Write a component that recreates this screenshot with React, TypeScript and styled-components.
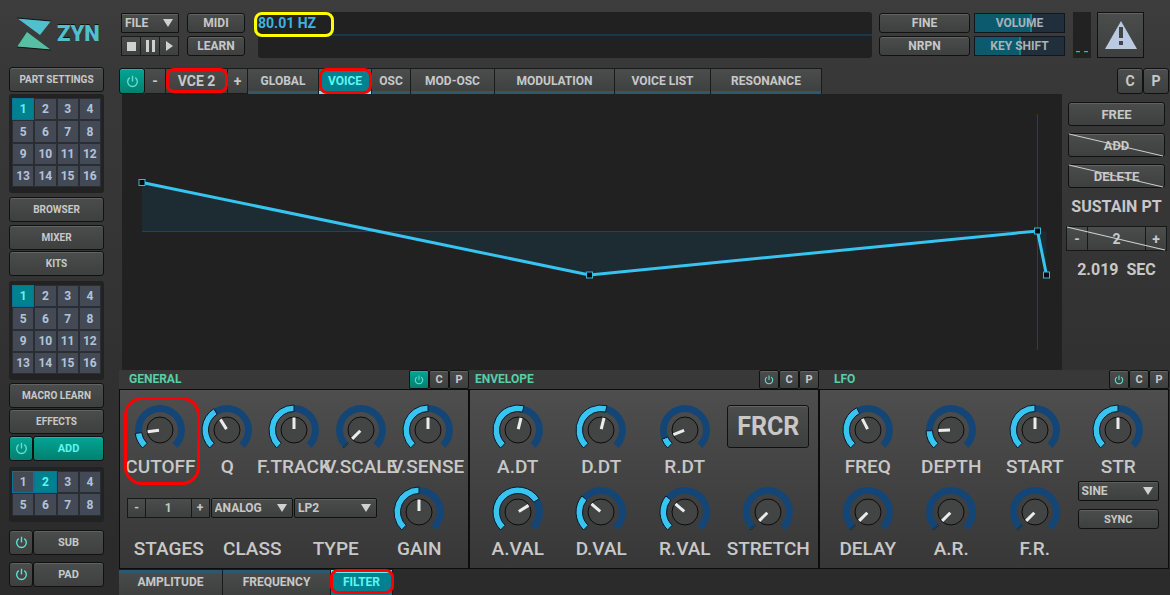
import React, { useState } from "react";
import styled, { createGlobalStyle } from "styled-components";

const GlobalStyle = createGlobalStyle`
  *, *::before, *::after { box-sizing: border-box; }
  body {
    margin: 0;
    background: #2b2b2b;
    color: #c8c8c8;
    font-family: Roboto, "Liberation Sans", sans-serif;
    font-weight: 700;
    font-size: 12px;
  }
  button, select, input { font: inherit; color: inherit; margin: 0; padding: 0; }
  button { cursor: pointer; }
`;

const face = "linear-gradient(#4b4d4c, #3e403f)";
const activeFace = "linear-gradient(#04a595, #028070)";

const Shell = styled.div`
  display: flex;
  min-height: 100vh;
  background: linear-gradient(#3d3d3d, #383838 12%, #363636 35%, #2b2b2b 92%);
`;

const Sidebar = styled.nav`
  flex: 0 0 119px;
  display: flex;
  flex-direction: column;
  padding: 0 15px 0 9px;
`;

const Main = styled.main`
  flex: 1;
  min-width: 0;
  padding-right: 1px;
`;

const Logo = styled.div`
  display: flex;
  align-items: center;
  height: 67px;
  padding-left: 7px;
  gap: 5px;
`;

const LogoText = styled.span`
  font-size: 22px;
  font-weight: 900;
  line-height: 24px;
  color: #4fc0cc;
  text-shadow: 0 -1px 0 #111;
`;

const Button = styled.button<{ $h?: number; $size?: number; $on?: boolean }>`
  display: flex;
  align-items: center;
  justify-content: center;
  width: 100%;
  height: ${(p) => p.$h ?? 25}px;
  border: 1px solid #111;
  border-radius: 3px;
  background: ${(p) => (p.$on ? activeFace : face)};
  box-shadow: inset 0 1px 0 ${(p) => (p.$on ? "#1fb5a5" : "#616362")};
  color: ${(p) => (p.$on ? "#5ff5ee" : "#c8c8c8")};
  font-size: ${(p) => p.$size ?? 12}px;
  white-space: nowrap;
`;

const Stack = styled.div<{ $top: number; $gap?: number }>`
  display: flex;
  flex-direction: column;
  gap: ${(p) => p.$gap ?? 1}px;
  margin-top: ${(p) => p.$top}px;
`;

const EngineRow = styled.div<{ $top: number }>`
  display: grid;
  grid-template-columns: 24px 1fr;
  margin-top: ${(p) => p.$top}px;
`;

const NumberPad = styled.div<{ $top: number }>`
  display: grid;
  grid-template-columns: repeat(4, 1fr);
  grid-template-rows: 22px 23px;
  grid-auto-rows: 22px;
  margin-top: ${(p) => p.$top}px;
  padding: 4px 3px 6px;
  border-radius: 3px;
  background: #222;
`;

const NumberCell = styled.button<{ $on?: boolean; $outlined?: boolean }>`
  border: 1px solid ${(p) => (p.$on || p.$outlined ? "#0b7292" : "#2a2d31")};
  background: ${(p) => (p.$on ? "#00818f" : "#434a56")};
  color: ${(p) => (p.$on ? "#5ff5ee" : "#b4c2d8")};
  font-size: 12px;
`;

const Header = styled.header`
  display: flex;
  height: 68px;
  padding: 12px 25px 10px 2px;
`;

const HeaderColumn = styled.div<{ $w: number; $left?: number }>`
  flex: 0 0 ${(p) => p.$w}px;
  display: flex;
  flex-direction: column;
  justify-content: space-between;
  margin-left: ${(p) => p.$left ?? 0}px;
  padding: 1px 0 2px;
`;

const FileButton = styled(Button)`
  justify-content: space-between;
  padding: 0 5px 0 3px;
  border-radius: 1px;
`;

const Transport = styled.div`
  display: flex;
  height: 20px;
  border-left: 1px solid #1a1a1a;
`;

const Display = styled.div`
  position: relative;
  flex: 1;
  min-width: 0;
  height: 46px;
  margin: 0 7px 0 13px;
  border-radius: 3px;
  background: #212121;
  color: #3cb4e0;
`;

const DisplayLine = styled.div`
  height: 24px;
  border-bottom: 2px solid #17384f;
  font-size: 14px;
  line-height: 22px;
`;

const SliderBox = styled.label<{ $fill: number }>`
  position: relative;
  display: flex;
  align-items: center;
  justify-content: center;
  height: 20px;
  border: 1px solid #10181d;
  background: linear-gradient(
    to right,
    #0c5a6e ${(p) => p.$fill - 2}%,
    #13808c ${(p) => p.$fill - 2}% ${(p) => p.$fill}%,
    #212f3d ${(p) => p.$fill}%
  );
  color: #a9b3b8;
`;

const GhostRange = styled.input`
  position: absolute;
  inset: 0;
  width: 100%;
  height: 100%;
  opacity: 0;
  cursor: pointer;
`;

const Meter = styled.div`
  flex: 0 0 18px;
  display: flex;
  align-items: flex-end;
  justify-content: space-around;
  height: 46px;
  margin: 0 6px 0 8px;
  padding: 0 1px 5px;
  background: #222;
`;

const MeterBar = styled.span`
  width: 4px;
  height: 2px;
  background: #16c5d4;
  border-bottom: 1px solid #174852;
`;

const PanicButton = styled(Button)`
  flex: 0 0 47px;
  height: 46px;
  border-radius: 0;
`;

const TabBar = styled.div`
  display: flex;
  height: 26px;
`;

const Tab = styled.button<{ $w: number; $on?: boolean; $edge?: "top" | "bottom" }>`
  position: relative;
  flex: 0 0 ${(p) => p.$w}px;
  padding-bottom: 2px;
  border: solid #1a1a1a;
  border-width: 1px 1px 0 0;
  background: ${(p) => (p.$on ? "#00818f" : face)};
  box-shadow: inset 0 ${(p) => (p.$edge === "top" ? 3 : -3)}px 0 ${(p) => (p.$on ? "#5ff5f5" : "#30586c")};
  color: ${(p) => (p.$on ? "#5ff5ee" : "#c8c8c8")};
  white-space: nowrap;
  font-size: 12px;
`;

const FlatButton = styled.button<{ $w: number; $size?: number }>`
  position: relative;
  flex: 0 0 ${(p) => p.$w}px;
  display: flex;
  align-items: center;
  justify-content: center;
  border: 1px solid #1a1a1a;
  border-left-width: 0;
  background: ${face};
  font-size: ${(p) => p.$size ?? 14}px;
`;

const Slot = styled.div<{ $w: number }>`
  flex: 0 0 ${(p) => p.$w}px;
`;

const Spring = styled.div`
  flex: 1;
`;

const Mark = styled.span<{ $inset: string; $radius?: number }>`
  position: absolute;
  inset: ${(p) => p.$inset};
  z-index: 2;
  border: 3px solid #ff0000;
  border-radius: ${(p) => p.$radius ?? 8}px;
  pointer-events: none;
`;

const ReadoutMark = styled.span`
  position: absolute;
  top: 0;
  left: -4px;
  width: 80px;
  height: 25px;
  border: 3px solid #ffff00;
  border-radius: 8px;
`;

const EditorRow = styled.section`
  display: flex;
  height: 276px;
`;

const Graph = styled.div`
  flex: 1;
  min-width: 0;
  margin-left: 3px;
  background: #212121;
  svg { display: block; width: 100%; height: 100%; }
`;

const PointTools = styled.aside`
  flex: 0 0 107px;
  display: flex;
  flex-direction: column;
  gap: 7px;
  padding: 8px 4px 0 6px;
`;

const Struck = styled.div`
  position: relative;
  svg {
    position: absolute;
    inset: 0;
    width: 100%;
    height: 100%;
    pointer-events: none;
  }
`;

const SpinnerStruck = styled(Struck)`
  margin: 0 -2px;
`;

const ToolText = styled.div`
  height: 24px;
  font-size: 16px;
  line-height: 24px;
  text-align: center;
  white-space: pre;
`;

const Spinner = styled.div<{ $h: number; $side: number; $size?: number }>`
  display: grid;
  grid-template-columns: ${(p) => p.$side}px 1fr ${(p) => p.$side}px;
  height: ${(p) => p.$h}px;
  border: 1px solid #181818;
  background: ${face};
  font-size: ${(p) => p.$size ?? 12}px;
`;

const SpinnerButton = styled.button`
  border: 0;
  background: ${face};
`;

const SpinnerValue = styled.output`
  display: flex;
  align-items: center;
  justify-content: center;
  border: solid #181818;
  border-width: 0 1px;
`;

const Sections = styled.div`
  display: grid;
  grid-template-columns: repeat(3, minmax(0, 1fr));
`;

const SectionHead = styled.div<{ $indent: number }>`
  display: flex;
  height: 19px;
  padding-left: ${(p) => p.$indent}px;
  background: #383838;
`;

const SectionTitle = styled.h2`
  flex: 1;
  margin: 0;
  color: #58cfa8;
  font-size: 12px;
  font-weight: 700;
  line-height: 19px;
`;

const HeadButton = styled(Button)`
  width: 20px;
  height: 19px;
  border-radius: 2px;
`;

const SectionBody = styled.div<{ $left?: number; $right?: number }>`
  display: flex;
  flex-direction: column;
  gap: 8px;
  height: 180px;
  padding: 15px ${(p) => p.$right ?? 8}px 0 ${(p) => p.$left ?? 6}px;
  border: 1px solid #0d0d0d;
  background: linear-gradient(#4e4e4e, #373737);
`;

const KnobRow = styled.div<{ $cols: number }>`
  display: grid;
  grid-template-columns: repeat(${(p) => p.$cols}, minmax(0, 1fr));
  height: 74px;
`;

const Cell = styled.div`
  position: relative;
  display: flex;
  flex-direction: column;
  align-items: center;
`;

const KnobLabel = styled.label`
  position: relative;
  display: flex;
  flex-direction: column;
  align-items: center;
`;

const KnobText = styled.span`
  font-size: 19px;
  line-height: 24px;
  font-weight: 500;
  white-space: nowrap;
`;

const ControlSlot = styled.div`
  align-self: stretch;
  height: 50px;
  padding: 11px 1px 0 0;
`;

const ForceSlot = styled.div`
  width: 82px;
`;

const SideControls = styled.div`
  display: flex;
  flex-direction: column;
  gap: 8px;
  padding: 0 1px;
  margin-top: -6px;
`;

const SelectBox = styled.span`
  position: relative;
  display: block;
  svg { position: absolute; right: 6px; top: 6px; pointer-events: none; }
`;

const Select = styled.select`
  appearance: none;
  display: block;
  width: 100%;
  height: 20px;
  padding-left: 3px;
  border: 1px solid #111;
  border-radius: 2px;
  background: ${face};
  box-shadow: inset 0 1px 0 #5c5e5d;
`;

function PowerIcon({ size = 13, color = "#5fe0cc" }: { size?: number; color?: string }) {
  return (
    <svg width={size} height={size} viewBox="0 0 14 14" fill="none" stroke={color} strokeWidth="1.5" aria-hidden="true">
      <path d="M4 2.9A5.2 5.2 0 1 0 10 2.9M7 0.8V7" />
    </svg>
  );
}

function Triangle() {
  return (
    <svg width="10" height="8" viewBox="0 0 10 8" aria-hidden="true">
      <path d="M0 0H10L5 8Z" fill="#d0d0d0" />
    </svg>
  );
}

const polar = (r: number, deg: number) => {
  const a = (deg * Math.PI) / 180;
  return `${(25 + r * Math.sin(a)).toFixed(2)} ${(25 - r * Math.cos(a)).toFixed(2)}`;
};

function sector(inner: number, outer: number, from: number, to: number) {
  const large = to - from > 180 ? 1 : 0;
  return `M${polar(outer, from)}A${outer} ${outer} 0 ${large} 1 ${polar(outer, to)}L${polar(inner, to)}A${inner} ${inner} 0 ${large} 0 ${polar(inner, from)}Z`;
}

function Knob({ name, angle, marked }: { name: string; angle: number; marked?: boolean }) {
  const [value, setValue] = useState(angle);
  return (
    <Cell>
      <KnobLabel>
        <svg width="50" height="50" viewBox="0 0 50 50" overflow="visible" aria-hidden="true">
          <path d={sector(18, 25, -136, 136)} fill="#134676" />
          <path d={sector(18.5, 25, -136, Math.max(value, -134))} fill="#38c4f0" stroke="#0b1a24" />
          <circle cx="25" cy="25" r="13" fill="#434544" stroke="#0c0c0c" />
          <path d={`M${polar(1, value)}L${polar(12.5, value)}`} stroke="#ececec" strokeWidth="3" />
        </svg>
        <KnobText>{name}</KnobText>
        <GhostRange type="range" min={-135} max={135} value={value} onChange={(e) => setValue(+e.target.value)} />
      </KnobLabel>
      {marked && <Mark $inset="-8px -6px -6px -3px" $radius={18} />}
    </Cell>
  );
}

function Dropdown({ label, options }: { label: string; options: string[] }) {
  return (
    <SelectBox>
      <Select aria-label={label}>
        {options.map((o) => (
          <option key={o}>{o}</option>
        ))}
      </Select>
      <Triangle />
    </SelectBox>
  );
}

function Pad({ label, count, top, on, outlined }: { label: string; count: number; top: number; on: number; outlined?: number }) {
  const [selected, setSelected] = useState(on);
  return (
    <NumberPad $top={top} role="group" aria-label={label}>
      {Array.from({ length: count }, (_, i) => i + 1).map((n) => (
        <NumberCell key={n} $on={n === selected} $outlined={n === outlined} onClick={() => setSelected(n)}>
          {n}
        </NumberCell>
      ))}
    </NumberPad>
  );
}

function Engine({ name, top, on }: { name: string; top: number; on?: boolean }) {
  return (
    <EngineRow $top={top}>
      <Button $on={on} aria-label={`${name} power`}><PowerIcon /></Button>
      <Button $on={on} $size={11}>{name}</Button>
    </EngineRow>
  );
}

function Head({ title, indent, on }: { title: string; indent: number; on?: boolean }) {
  return (
    <SectionHead $indent={indent}>
      <SectionTitle>{title}</SectionTitle>
      <HeadButton $on={on} aria-label={`${title} power`}><PowerIcon size={10} /></HeadButton>
      <HeadButton $size={11}>C</HeadButton>
      <HeadButton $size={11}>P</HeadButton>
    </SectionHead>
  );
}

function Strike() {
  return (
    <svg viewBox="0 0 98 24" preserveAspectRatio="none" aria-hidden="true">
      <path d="M1 1L96 23" stroke="#d0d0d0" />
    </svg>
  );
}

function EnvelopeGraph() {
  const points = [[20, 88.5], [467.5, 181], [915.5, 137], [924.5, 181]];
  const line = points.map((p) => p.join(" ")).join("L");
  return (
    <svg viewBox="0 0 940 276" preserveAspectRatio="none" role="img" aria-label="Filter envelope">
      <path d={`M20 137.5L${line}V137.5Z`} fill="#1d2b33" />
      <path d="M20 137.5H915" stroke="#1b4363" />
      <path d="M915.5 20V256" stroke="#1a4270" />
      <path d={`M${line}`} fill="none" stroke="#38c4f0" strokeWidth="3" />
      {points.map(([x, y]) => (
        <rect key={x} x={x - 3} y={y - 3} width="6" height="6" fill="#0a0a0a" stroke="#38b8e0" />
      ))}
    </svg>
  );
}

export default function App() {
  return (
    <>
      <GlobalStyle />
      <Shell>
        <Sidebar>
          <Logo>
            <svg width="36" height="34" viewBox="0 0 36 34" aria-hidden="true">
              <path d="M1 1L35 4L24 18Z" fill="#4fc0cc" />
              <path d="M1 1L35 4" stroke="#111" />
              <path d="M11 15L35 33L1 30Z" fill="#56bfa4" />
              <path d="M1 30L35 33" stroke="#111" />
            </svg>
            <LogoText>ZYN</LogoText>
          </Logo>
          <Button $size={10}>PART SETTINGS</Button>
          <Pad label="Parts" count={16} top={2} on={1} />
          <Stack $top={4} $gap={3}>
            <Button $size={10}>BROWSER</Button>
            <Button $size={10}>MIXER</Button>
          </Stack>
          <Stack $top={1}>
            <Button $size={10}>KITS</Button>
          </Stack>
          <Pad label="Kit items" count={16} top={5} on={1} />
          <Stack $top={3}>
            <Button $size={10}>MACRO LEARN</Button>
            <Button $size={10}>EFFECTS</Button>
          </Stack>
          <Engine name="ADD" top={2} on />
          <Pad label="Voices" count={8} top={6} on={2} outlined={1} />
          <Engine name="SUB" top={8} />
          <Engine name="PAD" top={7} />
        </Sidebar>

        <Main>
          <Header>
            <HeaderColumn $w={58}>
              <FileButton $h={20}>FILE <Triangle /></FileButton>
              <Transport>
                <FlatButton $w={19} aria-label="Stop">
                  <svg width="9" height="9" viewBox="0 0 9 9"><rect width="9" height="9" fill="#d0d0d0" /></svg>
                </FlatButton>
                <FlatButton $w={19} aria-label="Pause">
                  <svg width="9" height="12" viewBox="0 0 9 12"><path d="M0 0H3V12H0ZM6 0H9V12H6Z" fill="#d0d0d0" /></svg>
                </FlatButton>
                <FlatButton $w={19} aria-label="Play">
                  <svg width="7" height="10" viewBox="0 0 7 10"><path d="M0 0L7 5L0 10Z" fill="#d0d0d0" /></svg>
                </FlatButton>
              </Transport>
            </HeaderColumn>
            <HeaderColumn $w={58} $left={8}>
              <Button $h={20}>MIDI</Button>
              <Button $h={20}>LEARN</Button>
            </HeaderColumn>
            <Display>
              <DisplayLine>80.01 HZ</DisplayLine>
              <ReadoutMark />
            </Display>
            <HeaderColumn $w={91}>
              <Button $h={20}>FINE</Button>
              <Button $h={20}>NRPN</Button>
            </HeaderColumn>
            <HeaderColumn $w={91} $left={4}>
              <SliderBox $fill={64}>VOLUME<GhostRange type="range" defaultValue={64} /></SliderBox>
              <SliderBox $fill={52}>KEY SHIFT<GhostRange type="range" defaultValue={52} /></SliderBox>
            </HeaderColumn>
            <Meter><MeterBar /><MeterBar /></Meter>
            <PanicButton aria-label="Panic">
              <svg width="32" height="28" viewBox="0 0 32 28" aria-hidden="true">
                <path d="M16 0L32 28H0Z" fill="#b9cae2" />
                <path d="M14 6H18V17H14ZM14 20H18V24H14Z" fill="#434544" />
              </svg>
            </PanicButton>
          </Header>

          <TabBar>
            <Slot $w={26}><Button $h={26} $on aria-label="Voice power"><PowerIcon /></Button></Slot>
            <FlatButton $w={21} aria-label="Previous voice">-</FlatButton>
            <FlatButton $w={62}>VCE 2<Mark $inset="-1px -1px 0 0" /></FlatButton>
            <FlatButton $w={20} aria-label="Next voice">+</FlatButton>
            <Tab $w={71}>GLOBAL</Tab>
            <Tab $w={53} $on>VOICE<Mark $inset="-1px -1px 0 0" /></Tab>
            <Tab $w={39}>OSC</Tab>
            <Tab $w={84}>MOD-OSC</Tab>
            <Tab $w={120}>MODULATION</Tab>
            <Tab $w={96}>VOICE LIST</Tab>
            <Tab $w={111}>RESONANCE</Tab>
            <Spring />
            <Slot $w={26}><Button $h={26} $size={14}>C</Button></Slot>
            <Slot $w={26}><Button $h={26} $size={14}>P</Button></Slot>
          </TabBar>

          <EditorRow>
            <Graph><EnvelopeGraph /></Graph>
            <PointTools>
              <Button $h={24} $size={13}>FREE</Button>
              <Struck><Button $h={24} $size={13}>ADD</Button><Strike /></Struck>
              <Struck><Button $h={24} $size={13}>DELETE</Button><Strike /></Struck>
              <ToolText>SUSTAIN PT</ToolText>
              <SpinnerStruck>
                <Spinner $h={25} $side={20} $size={14}>
                  <SpinnerButton aria-label="Previous point">-</SpinnerButton>
                  <SpinnerValue>2</SpinnerValue>
                  <SpinnerButton aria-label="Next point">+</SpinnerButton>
                </Spinner>
                <Strike />
              </SpinnerStruck>
              <ToolText>{"2.019  SEC"}</ToolText>
            </PointTools>
          </EditorRow>

          <Sections>
            <section>
              <Head title="GENERAL" indent={10} on />
              <SectionBody $left={7} $right={7}>
                <KnobRow $cols={5}>
                  <Knob name="CUTOFF" angle={-98} marked />
                  <Knob name="Q" angle={-32} />
                  <Knob name="F.TRACK" angle={0} />
                  <Knob name="V.SCALE" angle={-135} />
                  <Knob name="V.SENSE" angle={0} />
                </KnobRow>
                <KnobRow $cols={4}>
                  <Cell>
                    <ControlSlot>
                      <Spinner $h={20} $side={17}>
                        <SpinnerButton aria-label="Fewer stages">-</SpinnerButton>
                        <SpinnerValue>1</SpinnerValue>
                        <SpinnerButton aria-label="More stages">+</SpinnerButton>
                      </Spinner>
                    </ControlSlot>
                    <KnobText>STAGES</KnobText>
                  </Cell>
                  <Cell>
                    <ControlSlot><Dropdown label="Class" options={["ANALOG", "FORMANT", "ST VAR"]} /></ControlSlot>
                    <KnobText>CLASS</KnobText>
                  </Cell>
                  <Cell>
                    <ControlSlot><Dropdown label="Type" options={["LP2", "HP2", "BP2"]} /></ControlSlot>
                    <KnobText>TYPE</KnobText>
                  </Cell>
                  <Knob name="GAIN" angle={0} />
                </KnobRow>
              </SectionBody>
            </section>

            <section>
              <Head title="ENVELOPE" indent={6} />
              <SectionBody>
                <KnobRow $cols={4}>
                  <Knob name="A.DT" angle={14} />
                  <Knob name="D.DT" angle={14} />
                  <Knob name="R.DT" angle={-112} />
                  <Cell><ForceSlot><Button $h={43} $size={25}>FRCR</Button></ForceSlot></Cell>
                </KnobRow>
                <KnobRow $cols={4}>
                  <Knob name="A.VAL" angle={58} />
                  <Knob name="D.VAL" angle={-50} />
                  <Knob name="R.VAL" angle={-50} />
                  <Knob name="STRETCH" angle={-135} />
                </KnobRow>
              </SectionBody>
            </section>

            <section>
              <Head title="LFO" indent={15} />
              <SectionBody>
                <KnobRow $cols={4}>
                  <Knob name="FREQ" angle={-27} />
                  <Knob name="DEPTH" angle={-92} />
                  <Knob name="START" angle={0} />
                  <Knob name="STR" angle={0} />
                </KnobRow>
                <KnobRow $cols={4}>
                  <Knob name="DELAY" angle={-135} />
                  <Knob name="A.R." angle={-135} />
                  <Knob name="F.R." angle={-135} />
                  <SideControls>
                    <Dropdown label="LFO shape" options={["SINE", "TRIANGLE", "SQUARE"]} />
                    <Button $h={20} $size={11}>SYNC</Button>
                  </SideControls>
                </KnobRow>
              </SectionBody>
            </section>
          </Sections>

          <TabBar>
            <Tab $w={104} $edge="top">AMPLITUDE</Tab>
            <Tab $w={108} $edge="top">FREQUENCY</Tab>
            <Tab $w={62} $edge="top" $on>FILTER<Mark $inset="-1px -2px 1px -1px" /></Tab>
          </TabBar>
        </Main>
      </Shell>
    </>
  );
}
